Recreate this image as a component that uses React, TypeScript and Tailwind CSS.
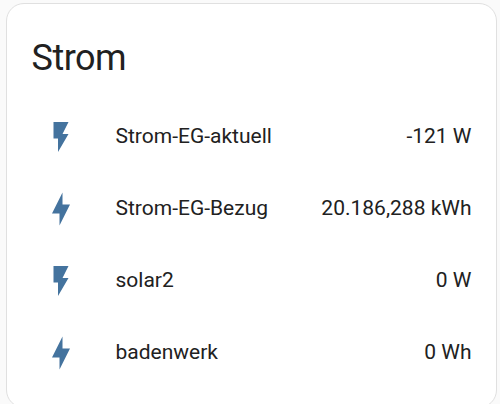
interface Entity {
  name: string;
  state: string;
  icon: "flash" | "bolt";
}

const ENTITIES: Entity[] = [
  { name: "Strom-EG-aktuell", state: "-121 W", icon: "flash" },
  { name: "Strom-EG-Bezug", state: "20.186,288 kWh", icon: "bolt" },
  { name: "solar2", state: "0 W", icon: "flash" },
  { name: "badenwerk", state: "0 Wh", icon: "bolt" },
];

const ICON_PATHS = {
  flash: "M7 2v11h3v9l7-12h-4l4-8H7Z",
  bolt: "M11 15H6l7-14v8h5l-7 14v-8Z",
};

function EntityRow({ name, state, icon }: Entity) {
  return (
    <li className="flex h-[60px] items-center">
      <span className="flex w-[60px] shrink-0 justify-center pt-0.5">
        <svg viewBox="0 0 24 24" className="size-9 fill-[#44739e]" aria-hidden="true">
          <path d={ICON_PATHS[icon]} />
        </svg>
      </span>
      <span className="ml-[24.5px] grow">{name}</span>
      <span>{state}</span>
    </li>
  );
}

export default function App() {
  return (
    <main className="h-[404px] overflow-hidden bg-[#fafafa] pt-[3px] pr-[3px] pl-1.5 font-['Roboto',sans-serif] text-[#212121]">
      <section className="h-[405px] rounded-[18px] border border-[#e0e0e0] bg-white pr-[24.5px] pl-6">
        <h1 className="pt-[30px] pl-[0.5px] text-[36px] leading-[48px] tracking-[-0.5px]">Strom</h1>
        <ul className="mt-6 flex flex-col gap-3 text-[21px] leading-[30px]">
          {ENTITIES.map((entity) => (
            <EntityRow key={entity.name} {...entity} />
          ))}
        </ul>
      </section>
    </main>
  );
}
